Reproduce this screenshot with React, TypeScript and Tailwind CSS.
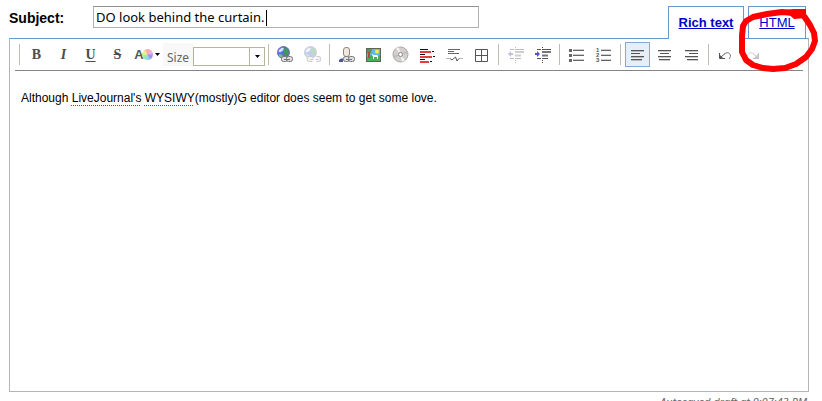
import React from "react";

type IconProps = { children: React.ReactNode; className?: string };

const Icon = ({ children, className = "" }: IconProps) => (
  <svg
    width="17"
    height="17"
    viewBox="0 0 17 17"
    fill="none"
    className={className}
    aria-hidden="true"
  >
    {children}
  </svg>
);

const Globe = () => (
  <>
    <circle cx="6.5" cy="6.5" r="6" fill="#5b6be0" stroke="#6b74a8" />
    <path d="M2 4l3-2.500 2 1-1 2-3 2-1.500-1z" fill="#d5e4f6" />
    <path d="M8 1.500l3.500 2 .5 4-2 2-3-1 .5-2-1.500-1z" fill="#3f9a55" />
    <path d="M2 8l3 .5 1 2.500-2 .5-2-1.500z" fill="#6fc480" />
  </>
);

const Chain = () => (
  <g stroke="#77777a" fill="#dedede">
    <rect x="4.500" y="10.500" width="6" height="5" rx="2" />
    <rect x="9.500" y="10.500" width="6" height="5" rx="2" />
    <path d="M7 13.500h6" />
  </g>
);

const LinkIcon = () => (
  <Icon>
    <Globe />
    <Chain />
  </Icon>
);

const UnlinkIcon = () => (
  <Icon className="opacity-35">
    <Globe />
    <g stroke="#66666a" fill="#dedede">
      <path d="M8.500 10.500h-3a2 2 0 0 0 0 5h3M6.500 13.500h3" />
      <path d="M12.500 10.500h2a2 2 0 0 1 0 5h-2M11.500 13.500h3" />
    </g>
  </Icon>
);

const UserIcon = () => (
  <Icon>
    <rect x="5.500" y="1.500" width="6" height="9" rx="2.500" fill="#f1e8dd" stroke="#8c8680" />
    <path d="M1 16v-2l2-1.500h2V16z" fill="#4c5596" />
    <g transform="translate(1 0)">
      <Chain />
    </g>
  </Icon>
);

const ImageIcon = () => (
  <Icon>
    <rect x="1.500" y="2.500" width="14" height="13" fill="#62b5ee" stroke="#5c6658" />
    <path d="M2 11l4-2 4 2 5-2v6H2z" fill="#4fae55" />
    <path d="M2 3h5l-1 4-2 1-2-1z" fill="#4c9c4c" />
    <path d="M3 6h2v6H3z" fill="#b9483c" />
    <circle cx="12" cy="5.500" r="2" fill="#ffe94a" />
    <path d="M7 8l1.500 1H12l1 1v3h-1v-2H9v2H8v-3L7 9z" fill="#fff" />
  </Icon>
);

const DiscIcon = () => (
  <Icon>
    <circle cx="8.500" cy="8.500" r="7.500" fill="#d3cfcc" stroke="#aaa7a5" />
    <path d="M8.500 8.500L4 2.500l3-1.300zM8.500 8.500L13 14.500l-3 1.300z" fill="#f5f3f1" />
    <path d="M8.500 8.500L15 4.500l1 3zM8.500 8.500L2 12.500l-1-3z" fill="#c2beba" />
    <circle cx="8.500" cy="8.500" r="2" fill="#fff" stroke="#8d8a88" />
  </Icon>
);

const CutIcon = () => (
  <Icon>
    <path d="M1 3.500h8M1 8.500h5M1 13.500h5M13 5.500h2M14 10.500h2M11 15.500h2" stroke="#111" />
    <path d="M1 6h11M1 11h12M1 16h9" stroke="#e63c3c" strokeWidth="2" />
  </Icon>
);

const PollIcon = () => (
  <Icon>
    <path d="M2 3.500h12M2 5.500h6M2 7.500h11" stroke="#666" />
    <path d="M0 12.500h4M13 12.500h4" stroke="#b5b5b5" />
    <path d="M4 12.500l2 1.500 3.500-3 1.500 4 2-2.500" stroke="#555" />
  </Icon>
);

const TableIcon = () => (
  <Icon>
    <path d="M2.500 3.500h12v12h-12zM8.500 3v13M2 9.500h13" stroke="#555" />
  </Icon>
);

const OutdentIcon = () => (
  <Icon className="opacity-35">
    <path d="M8.500 1v1M8.500 14v1M8.500 16v1" stroke="#444" />
    <path d="M3 3.500h4M8 3.500h9M3 12.500h4M8 12.500h6" stroke="#444" />
    <path d="M8 6h9M8 9.500h6" stroke="#777" strokeWidth="2" />
    <path d="M1 8l3-3v2h2v2H4v2z" fill="#4a4fc4" />
  </Icon>
);

const IndentIcon = () => (
  <Icon>
    <path d="M8.500 1v1M8.500 14v1M8.500 16v1" stroke="#444" />
    <path d="M3 3.500h4M8 3.500h9M3 12.500h4M8 12.500h6" stroke="#555" />
    <path d="M8 6h9M8 9.500h6" stroke="#777" strokeWidth="2" />
    <path d="M6 8L3 5v2H1v2h2v2z" fill="#5257c0" />
  </Icon>
);

const BulletsIcon = () => (
  <Icon>
    <path d="M1 4.500h3M1 9.500h3M1 14.500h3" stroke="#666" strokeWidth="3" />
    <path d="M5 3.500h11M5 8.500h11M5 13.500h11" stroke="#ccc" />
    <path d="M5 4.500h11M5 9.500h11M5 14.500h11" stroke="#666" />
  </Icon>
);

const NumbersIcon = () => (
  <Icon>
    <g fill="#555" fontSize="6" fontWeight="bold" fontFamily="Liberation Sans, sans-serif">
      <text x="1" y="6">1</text>
      <text x="1" y="11">2</text>
      <text x="1" y="16">3</text>
    </g>
    <path d="M6 3.500h10M6 8.500h10M6 13.500h10" stroke="#ccc" />
    <path d="M6 4.500h10M6 9.500h10M6 14.500h10" stroke="#666" />
  </Icon>
);

const AlignLeftIcon = () => (
  <Icon>
    <path d="M2 4.500h13M2 7.500h9M2 10.500h13M2 13.500h11" stroke="#555" />
    <path d="M2 5.500h13M2 11.500h13M2 14.500h11" stroke="#bbb" />
  </Icon>
);

const AlignCenterIcon = () => (
  <Icon>
    <path d="M2 4.500h13M4 7.500h9M2 10.500h13M3 13.500h11" stroke="#555" />
    <path d="M2 5.500h13M2 11.500h13M3 14.500h11" stroke="#ccc" />
  </Icon>
);

const AlignRightIcon = () => (
  <Icon>
    <path d="M2 4.500h13M6 7.500h9M2 10.500h13M4 13.500h11" stroke="#555" />
    <path d="M2 5.500h13M2 11.500h13M4 14.500h11" stroke="#ccc" />
  </Icon>
);

const UndoIcon = () => (
  <Icon>
    <path d="M2.500 7v5.500H8M3 12l5-4.500" stroke="#555" />
    <path d="M3 9v3h3z" fill="#555" />
    <path d="M7.500 8C9 6.500 11 6.300 12.500 7.500c1.500 1.500 1.200 4-.5 5.500" stroke="#777" />
  </Icon>
);

const RedoIcon = () => (
  <Icon>
    <path d="M14.500 7v5.500H9M14 12L9 7.500" stroke="#c0c0c0" />
    <path d="M14 8v4h-4z" fill="#c8c8c8" />
    <path d="M9.500 8C8 6.500 6 6.300 4.500 7.500c-1.500 1.500-1.200 4 .5 5.500" stroke="#d2d2d2" />
  </Icon>
);

const Caret = ({ className = "" }: { className?: string }) => (
  <svg width="5" height="3" viewBox="0 0 5 3" className={className} aria-hidden="true">
    <path d="M0 0h5L2.500 3z" fill="#000" />
  </svg>
);

const Divider = () => (
  <span className="flex w-[7px] shrink-0 justify-center">
    <span className="h-[21px] w-px bg-[#bdbdb0]" />
  </span>
);

type ToolButtonProps = {
  label: string;
  children: React.ReactNode;
  active?: boolean;
};

const ToolButton = ({ label, children, active }: ToolButtonProps) => (
  <button
    type="button"
    aria-label={label}
    aria-pressed={active}
    className={
      active
        ? "mx-px flex h-[25px] w-[25px] shrink-0 items-center justify-center border border-[#8aa9d0] bg-[#e6eef8]"
        : "flex h-[25px] w-[27px] shrink-0 items-center justify-center font-['Liberation_Serif',serif] text-sm font-bold text-[#4c4c4c]"
    }
  >
    {children}
  </button>
);

const Toolbar = () => (
  <div className="mx-[5px] flex h-8 items-center border-b border-[#858585] pl-px">
    <Divider />
    <ToolButton label="Bold">B</ToolButton>
    <ToolButton label="Italic">
      <i>I</i>
    </ToolButton>
    <ToolButton label="Underline">
      <u className="underline-offset-2">U</u>
    </ToolButton>
    <ToolButton label="Strikethrough">
      <s>S</s>
    </ToolButton>
    <button
      type="button"
      aria-label="Text color"
      className="flex h-[25px] w-8 shrink-0 items-center justify-center text-[#555]"
    >
      <span className="font-['Liberation_Sans',sans-serif] text-[13px] font-bold">A</span>
      <span className="-ml-0.5 h-[11px] w-[11px] shrink-0 rounded-full bg-[conic-gradient(#f9a8a0,#f7b0e8,#9a8cf0,#90dcf0,#a0ee90,#f4f49a,#f9a8a0)]" />
      <Caret className="ml-0.5 shrink-0" />
    </button>
    <label
      htmlFor="size"
      className="flex h-[23px] w-[30px] shrink-0 items-end justify-center bg-[#f8f8f8] font-['Noto_Sans',sans-serif] text-xs text-[#666]"
    >
      Size
    </label>
    <div className="relative mt-1 h-[19px] w-[72px] shrink-0">
      <select
        id="size"
        defaultValue=""
        className="block h-full w-full appearance-none border border-[#b5b59c] bg-white text-xs"
      >
        <option value=""></option>
      </select>
      <span className="pointer-events-none absolute inset-y-0 right-0 flex w-4 items-center justify-center border-l border-[#b5b59c]">
        <Caret />
      </span>
    </div>
    <Divider />
    <ToolButton label="Insert link"><LinkIcon /></ToolButton>
    <ToolButton label="Remove link"><UnlinkIcon /></ToolButton>
    <Divider />
    <ToolButton label="Link to user"><UserIcon /></ToolButton>
    <ToolButton label="Insert image"><ImageIcon /></ToolButton>
    <ToolButton label="Embed media"><DiscIcon /></ToolButton>
    <ToolButton label="Insert cut"><CutIcon /></ToolButton>
    <ToolButton label="Insert poll"><PollIcon /></ToolButton>
    <ToolButton label="Insert table"><TableIcon /></ToolButton>
    <Divider />
    <ToolButton label="Outdent"><OutdentIcon /></ToolButton>
    <ToolButton label="Indent"><IndentIcon /></ToolButton>
    <Divider />
    <ToolButton label="Bulleted list"><BulletsIcon /></ToolButton>
    <ToolButton label="Numbered list"><NumbersIcon /></ToolButton>
    <Divider />
    <ToolButton label="Align left" active><AlignLeftIcon /></ToolButton>
    <ToolButton label="Align center"><AlignCenterIcon /></ToolButton>
    <ToolButton label="Align right"><AlignRightIcon /></ToolButton>
    <Divider />
    <ToolButton label="Undo"><UndoIcon /></ToolButton>
    <ToolButton label="Redo"><RedoIcon /></ToolButton>
  </div>
);

const misspelled =
  "underline decoration-dotted decoration-[#e02020] decoration-1 underline-offset-3";

const App = () => {
  return (
    <div className="relative flex h-screen flex-col overflow-hidden bg-white pl-[9px] pr-[13px] font-['Liberation_Sans',Arial,sans-serif] text-black">
      <div className="flex items-start pt-1.5">
        <label htmlFor="subject" className="w-21 shrink-0 text-sm leading-6 font-bold">
          Subject:
        </label>
        <div className="relative w-[386px]">
          <input
            id="subject"
            type="text"
            defaultValue="DO look behind the curtain."
            className="block h-[22px] w-full border border-[#b0b0b0] border-t-[#8e8e8e] bg-white px-0.5 font-['Noto_Sans',sans-serif] text-[13px] outline-none"
          />
          <span className="absolute top-1 left-[173px] h-4 w-px bg-black" />
        </div>
        <nav className="relative z-10 -mb-px ml-auto mr-[3px] flex gap-1 text-[13px]">
          <a
            href="#rich"
            className="flex h-[33px] w-[76px] items-center justify-center border border-b-0 border-[#6699cc] bg-white font-bold text-[#0000cc] underline"
          >
            Rich text
          </a>
          <a
            href="#html"
            className="flex h-8 w-[58px] items-center justify-center border border-b-0 border-[#6699cc] bg-white text-[#0000cc] underline"
          >
            HTML
          </a>
        </nav>
      </div>
      <main className="flex-1 border border-[#b5b5b5] border-t-[#6699cc]">
        <Toolbar />
        <p className="px-[11px] pt-[18px] text-xs leading-[18px]">
          Although <span className={misspelled}>LiveJournal's</span>{" "}
          <span className={misspelled}>WYSIWY</span>(mostly)G editor does seem to get some love.
        </p>
      </main>
      <footer className="h-[9px] shrink-0 overflow-hidden pt-0.5 pr-0.5 text-right font-['Noto_Sans',sans-serif] text-[11px] leading-4 text-[#666] italic">
        Autosaved draft at 9:07:43 PM
      </footer>
      {/* hand-drawn ring around the HTML tab */}
      <svg
        width="82"
        height="66"
        viewBox="0 0 82 66"
        fill="none"
        className="pointer-events-none absolute top-2 right-[2px] z-20"
        aria-hidden="true"
      >
        <path
          d="M66 6L44 4 29 6 15 9 8 13 5 18 4 28 4 36 4 44 8 52 15 57 25 60 35 61 47 60 58 56 68 49 74 41 77 33 76 25 72 17 66 8"
          stroke="#ff0000"
          strokeWidth="6"
          strokeLinejoin="round"
        />
        <path d="M46 2l10-1h12v9l-12 1z" fill="#ff0000" />
      </svg>
    </div>
  );
};

export default App;
